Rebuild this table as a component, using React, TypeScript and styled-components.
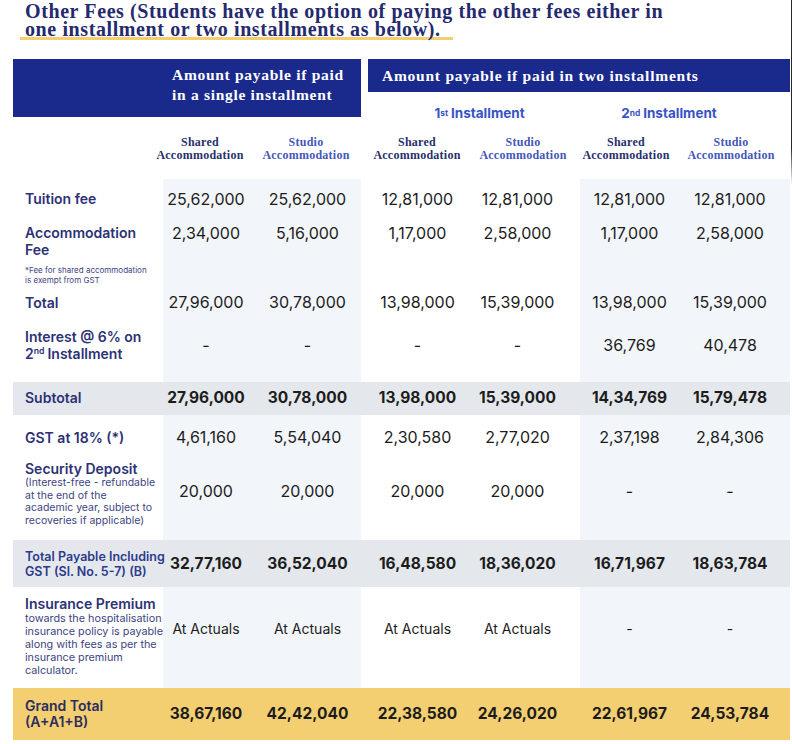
import React from 'react';
import styled, { createGlobalStyle } from 'styled-components';

const GlobalStyle = createGlobalStyle`
  html, body { margin: 0; padding: 0; background: #ffffff; }
  body { width: 792px; height: 744px; overflow: hidden; font-family: Inter, "Noto Sans", sans-serif; }
  * { box-sizing: border-box; }
`;

const COLS = '150px 99px 99px 109px 110px 105px 105px';
const NAVY = '#2c3275';
const HEAD_BLUE = '#1a2a8c';
const SHADE = '#f2f5f9';
const BAND = '#e4e8ec';
const GOLD = '#f4cf72';

// per-column [padding-left, padding-right] to place values as in the source
const VALUE_PAD: [number, number][] = [
  [0, 13],
  [0, 8],
  [4, 0],
  [0, 15],
  [0, 6],
  [0, 15],
];
const HEAD_PAD: [number, number][] = [
  [0, 25],
  [0, 11],
  [3, 0],
  [0, 4],
  [0, 13],
  [0, 13],
];
const SHADED = [true, true, false, false, true, true];

const Page = styled.div`
  position: relative;
  width: 792px;
  height: 744px;
  padding-top: 2px;

  &::after {
    content: '';
    position: absolute;
    top: 0;
    right: 0;
    width: 1.5px;
    height: 185px;
    background: linear-gradient(#2a2a2a 0%, #2a2a2a 80%, rgba(42, 42, 42, 0) 100%);
  }
`;

const Title = styled.h1`
  margin: 0 0 0 25px;
  font-family: 'Liberation Serif', 'Times New Roman', serif;
  font-weight: 700;
  font-size: 20px;
  color: #25296d;
  white-space: nowrap;
  letter-spacing: 0.6px;
`;

const TitleLine = styled.div`
  height: 18px;
  line-height: 18px;
`;

const Highlight = styled.span`
  background: linear-gradient(#f3cf72, #f3cf72) no-repeat left bottom / 100% 3px;
  padding: 0 12px 0 5px;
  margin-left: -5px;
`;

const Table = styled.div`
  margin: 21px 0 0 13px;
  width: 777px;
`;

const HeadGrid = styled.div`
  display: grid;
  grid-template-columns: ${COLS};
  grid-template-rows: 33px 38px 49px;
`;

const SingleHead = styled.div`
  grid-column: 1 / 4;
  grid-row: 1 / 3;
  align-self: start;
  height: 58px;
  background: ${HEAD_BLUE};
  color: #ffffff;
  font-family: 'Liberation Serif', 'Times New Roman', serif;
  font-weight: 700;
  font-size: 15.5px;
  letter-spacing: 0.7px;
  line-height: 20px;
  padding: 6px 0 0 159px;
  white-space: nowrap;
`;

const TwoHead = styled.div`
  grid-column: 4 / 8;
  grid-row: 1;
  margin-left: 7px;
  background: ${HEAD_BLUE};
  color: #ffffff;
  font-family: 'Liberation Serif', 'Times New Roman', serif;
  font-weight: 700;
  font-size: 15.5px;
  letter-spacing: 0.75px;
  display: flex;
  align-items: center;
  padding-left: 14px;
  white-space: nowrap;
`;

const InstallmentHead = styled.div<{ $col: string; $pl: number; $pr: number }>`
  grid-row: 2;
  grid-column: ${(p) => p.$col};
  display: flex;
  justify-content: center;
  align-items: center;
  padding: 4px ${(p) => p.$pr}px 0 ${(p) => p.$pl}px;
  font-family: Inter, sans-serif;
  font-weight: 700;
  font-size: 13.5px;
  color: #3853c6;
  white-space: nowrap;
`;

const Sup = styled.sup`
  font-size: 0.62em;
  line-height: 0;
  vertical-align: 0.6em;
  margin-right: 3px;
`;

const SubHead = styled.div<{ $col: number; $color: string; $pl: number; $pr: number }>`
  grid-row: 3;
  grid-column: ${(p) => p.$col};
  display: flex;
  flex-direction: column;
  align-items: center;
  padding: 6px ${(p) => p.$pr}px 0 ${(p) => p.$pl}px;
  font-family: 'Liberation Serif', 'Times New Roman', serif;
  font-weight: 700;
  font-size: 12px;
  letter-spacing: 0.25px;
  line-height: 12.5px;
  color: ${(p) => p.$color};
  white-space: nowrap;
`;

const Row = styled.div<{ $h: number; $bg?: string }>`
  display: grid;
  grid-template-columns: ${COLS};
  height: ${(p) => p.$h}px;
  background: ${(p) => p.$bg || 'transparent'};
`;

const Label = styled.div<{ $justify: string; $pt: number; $pb: number; $color?: string }>`
  display: flex;
  flex-direction: column;
  justify-content: ${(p) => p.$justify};
  padding: ${(p) => p.$pt}px 0 ${(p) => p.$pb}px 12px;
  color: ${(p) => p.$color || NAVY};
  white-space: nowrap;
`;

const LabelMain = styled.div<{ $size?: number; $lh?: number }>`
  font-family: Inter, sans-serif;
  font-weight: 600;
  font-size: ${(p) => p.$size || 14}px;
  line-height: ${(p) => p.$lh || 17}px;
`;

const LabelNote = styled.div<{ $size: number; $lh: number; $mt?: number }>`
  font-family: Inter, sans-serif;
  font-weight: 400;
  font-size: ${(p) => p.$size}px;
  line-height: ${(p) => p.$lh}px;
  margin-top: ${(p) => p.$mt || 0}px;
  color: #3d4484;
`;

const Value = styled.div<{
  $shade: boolean;
  $bold: boolean;
  $size: number;
  $align: string;
  $pt: number;
  $pb: number;
  $pl: number;
  $pr: number;
}>`
  display: flex;
  justify-content: center;
  align-items: ${(p) => p.$align};
  padding: ${(p) => p.$pt}px ${(p) => p.$pr}px ${(p) => p.$pb}px ${(p) => p.$pl}px;
  background: ${(p) => (p.$shade ? SHADE : 'transparent')};
  font-family: Inter, sans-serif;
  font-weight: ${(p) => (p.$bold ? 700 : 400)};
  font-size: ${(p) => p.$size}px;
  line-height: 20px;
  color: #1c1c1c;
  white-space: nowrap;
`;

type RowDef = {
  key: string;
  h: number;
  band?: string;
  label: React.ReactNode;
  labelJustify?: string;
  labelPt?: number;
  labelPb?: number;
  labelColor?: string;
  values: string[];
  bold?: boolean;
  size?: number;
  align?: string;
  vPt?: number;
  vPb?: number;
};

const rows: RowDef[] = [
  {
    key: 'tuition',
    h: 39,
    label: <LabelMain>Tuition fee</LabelMain>,
    values: ['25,62,000', '25,62,000', '12,81,000', '12,81,000', '12,81,000', '12,81,000'],
  },
  {
    key: 'accommodation',
    h: 70,
    label: (
      <>
        <LabelMain>
          Accommodation
          <br />
          Fee
        </LabelMain>
        <LabelNote $size={8} $lh={10} $mt={7}>
          *Fee for shared accommodation
          <br />
          is exempt from GST
        </LabelNote>
      </>
    ),
    labelJustify: 'flex-start',
    labelPt: 6,
    values: ['2,34,000', '5,16,000', '1,17,000', '2,58,000', '1,17,000', '2,58,000'],
    align: 'flex-start',
    vPt: 5,
  },
  {
    key: 'total',
    h: 28,
    label: <LabelMain>Total</LabelMain>,
    values: ['27,96,000', '30,78,000', '13,98,000', '15,39,000', '13,98,000', '15,39,000'],
  },
  {
    key: 'interest',
    h: 66,
    label: (
      <LabelMain>
        Interest @ 6% on
        <br />2<Sup>nd</Sup>Installment
      </LabelMain>
    ),
    labelPb: 8,
    values: ['-', '-', '-', '-', '36,769', '40,478'],
    vPb: 8,
  },
  {
    key: 'subtotal',
    h: 33,
    band: BAND,
    label: <LabelMain>Subtotal</LabelMain>,
    labelPb: 2,
    values: ['27,96,000', '30,78,000', '13,98,000', '15,39,000', '14,34,769', '15,79,478'],
    bold: true,
    size: 15.5,
    vPb: 2,
  },
  {
    key: 'gst',
    h: 44,
    label: <LabelMain>GST at 18% (*)</LabelMain>,
    values: ['4,61,160', '5,54,040', '2,30,580', '2,77,020', '2,37,198', '2,84,306'],
  },
  {
    key: 'security',
    h: 81,
    label: (
      <>
        <LabelMain>Security Deposit</LabelMain>
        <LabelNote $size={10.5} $lh={12.7}>
          (Interest-free - refundable
          <br />
          at the end of the
          <br />
          academic year, subject to
          <br />
          recoveries if applicable)
        </LabelNote>
      </>
    ),
    labelJustify: 'flex-start',
    labelPt: 1,
    values: ['20,000', '20,000', '20,000', '20,000', '-', '-'],
    vPb: 17,
  },
  {
    key: 'payable',
    h: 47,
    band: BAND,
    label: (
      <LabelMain $size={12.5} $lh={15}>
        Total Payable Including
        <br />
        GST (Sl. No. 5-7) (B)
      </LabelMain>
    ),
    labelColor: '#2d3a8c',
    values: ['32,77,160', '36,52,040', '16,48,580', '18,36,020', '16,71,967', '18,63,784'],
    bold: true,
    size: 15.5,
  },
  {
    key: 'insurance',
    h: 101,
    label: (
      <>
        <LabelMain>Insurance Premium</LabelMain>
        <LabelNote $size={10.8} $lh={13}>
          towards the hospitalisation
          <br />
          insurance policy is payable
          <br />
          along with fees as per the
          <br />
          insurance premium
          <br />
          calculator.
        </LabelNote>
      </>
    ),
    labelJustify: 'flex-start',
    labelPt: 8,
    values: ['At Actuals', 'At Actuals', 'At Actuals', 'At Actuals', '-', '-'],
    size: 14,
    vPb: 17,
  },
  {
    key: 'grand',
    h: 52,
    band: GOLD,
    label: (
      <LabelMain $lh={16}>
        Grand Total
        <br />
        (A+A1+B)
      </LabelMain>
    ),
    labelColor: '#2a2d5e',
    values: ['38,67,160', '42,42,040', '22,38,580', '24,26,020', '22,61,967', '24,53,784'],
    bold: true,
    size: 15.5,
  },
];

const subHeads = [
  { top: 'Shared', color: '#27306b' },
  { top: 'Studio', color: '#4456b8' },
  { top: 'Shared', color: '#27306b' },
  { top: 'Studio', color: '#4456b8' },
  { top: 'Shared', color: '#27306b' },
  { top: 'Studio', color: '#4456b8' },
];

export default function App() {
  return (
    <>
      <GlobalStyle />
      <Page>
        <Title>
          <TitleLine>Other Fees (Students have the option of paying the other fees either in</TitleLine>
          <TitleLine>
            <Highlight>one installment or two installments as below).</Highlight>
          </TitleLine>
        </Title>
        <Table>
          <HeadGrid>
            <SingleHead>
              Amount payable if paid
              <br />
              in a single installment
            </SingleHead>
            <TwoHead>Amount payable if paid in two installments</TwoHead>
            <InstallmentHead $col="4 / 6" $pl={18} $pr={0}>
              1<Sup>st</Sup>Installment
            </InstallmentHead>
            <InstallmentHead $col="6 / 8" $pl={0} $pr={32}>
              2<Sup>nd</Sup>Installment
            </InstallmentHead>
            {subHeads.map((s, i) => (
              <SubHead key={i} $col={i + 2} $color={s.color} $pl={HEAD_PAD[i][0]} $pr={HEAD_PAD[i][1]}>
                <span>{s.top}</span>
                <span>Accommodation</span>
              </SubHead>
            ))}
          </HeadGrid>
          {rows.map((r) => (
            <Row key={r.key} $h={r.h} $bg={r.band}>
              <Label
                $justify={r.labelJustify || 'center'}
                $pt={r.labelPt || 0}
                $pb={r.labelPb || 0}
                $color={r.labelColor}
              >
                {r.label}
              </Label>
              {r.values.map((v, i) => (
                <Value
                  key={i}
                  $shade={!r.band && SHADED[i]}
                  $bold={!!r.bold}
                  $size={r.size || 16}
                  $align={r.align || 'center'}
                  $pt={r.vPt || 0}
                  $pb={r.vPb || 0}
                  $pl={VALUE_PAD[i][0]}
                  $pr={VALUE_PAD[i][1]}
                >
                  {v}
                </Value>
              ))}
            </Row>
          ))}
        </Table>
      </Page>
    </>
  );
}
